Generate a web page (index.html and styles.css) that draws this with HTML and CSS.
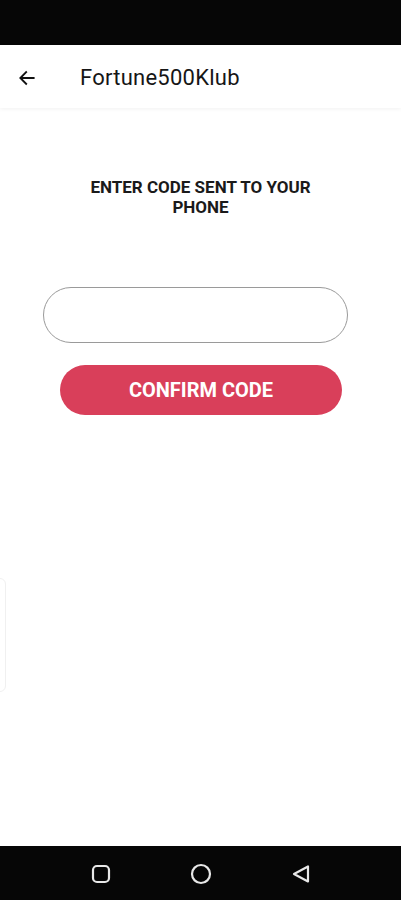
FILE: index.html
```html
<!DOCTYPE html>
<html>
<head>
<meta charset="utf-8">
<link rel="stylesheet" href="styles.css">
</head>
<body>
<div class="screen">
  <div class="statusbar"></div>
  <header class="appbar">
    <svg class="back" width="20" height="20" viewBox="0 0 24 24"><path d="M20 12H5M11 5l-7 7 7 7" fill="none" stroke="#111" stroke-width="2.2" stroke-linecap="square"/></svg>
    <h1 class="title">Fortune500Klub</h1>
  </header>
  <main class="content">
    <p class="prompt">ENTER CODE SENT TO YOUR<br>PHONE</p>
    <div class="input"></div>
    <button class="confirm">CONFIRM CODE</button>
    <div class="edge-card"></div>
  </main>
  <nav class="navbar">
    <svg width="20" height="20" viewBox="0 0 20 20"><rect x="2" y="2" width="16" height="16" rx="4" fill="none" stroke="#e8e8e8" stroke-width="2.2"/></svg>
    <svg width="22" height="22" viewBox="0 0 22 22"><circle cx="11" cy="11" r="9" fill="none" stroke="#e8e8e8" stroke-width="2.2"/></svg>
    <svg width="20" height="20" viewBox="0 0 20 20"><path d="M17 2.5 L17 17.5 L3 10 Z" fill="none" stroke="#e8e8e8" stroke-width="2.2" stroke-linejoin="round"/></svg>
  </nav>
</div>
</body>
</html>
```
FILE: styles.css
```css
* { box-sizing: border-box; }
html, body { margin: 0; padding: 0; }
body { font-family: Roboto, "Noto Sans", sans-serif; background: #fff; }
.screen { width: 401px; height: 900px; display: flex; flex-direction: column; overflow: hidden; }
.statusbar { height: 45px; background: #060606; flex: none; }
.appbar { height: 63px; flex: none; display: flex; align-items: center; background: #fff; box-shadow: 0 1px 4px rgba(0,0,0,0.06); position: relative; z-index: 1; }
.back { margin-left: 17px; margin-top: 2px; }
.title { margin: 0 0 0 43px; font-size: 22px; font-weight: 400; color: #161616; letter-spacing: 0.25px; padding-top: 2px; }
.content { flex: 1; display: flex; flex-direction: column; align-items: center; position: relative; }
.prompt { margin: 69px 0 0; font-size: 17px; font-weight: 700; line-height: 20px; text-align: center; color: #1a1a1a; }
.input { margin-top: 70px; width: 305px; height: 56px; border: 1px solid #9a9a9a; border-radius: 28px; margin-left: -10px; }
.confirm { margin-top: 22px; width: 282px; height: 50px; border: none; border-radius: 25px; background: #d93f5a; color: #fff; font-family: Roboto, sans-serif; font-weight: 700; font-size: 20px; margin-left: 1px; }
.edge-card { position: absolute; left: -10px; top: 470px; width: 16px; height: 114px; border: 1px solid #f0f0f0; border-radius: 6px; }
.navbar { height: 54px; flex: none; background: #060606; display: flex; align-items: center; justify-content: center; gap: 79px; padding-top: 1px; }
```
